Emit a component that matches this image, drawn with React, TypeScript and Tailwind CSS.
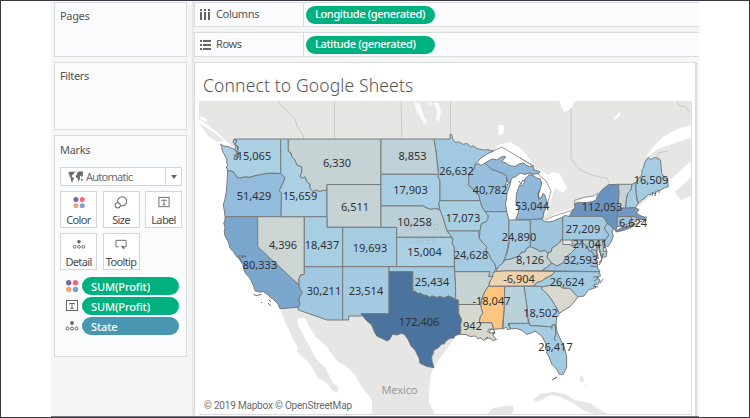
import React from "react";

const FONT = "font-['Noto_Sans','Open_Sans',sans-serif]";

type Shape = { id: string; fill: string; d: string };

const states: Shape[] = [
  { id: "WA", fill: "#abd0e3", d: "220.7,144.3 224,146 228,146.5 232,148.5 235,149.5 236,146 233,142 234,139 280.7,139 280.7,173.5 273,173.2 266.7,173.4 261,174.6 255,175.7 250,177.4 245,177 240,178 236.7,177.3 235,174 234,172.5 231,171 227.7,170.7 226.3,167 228,165 226.5,163 227,160 224,154 222,150 222,147.5" },
  { id: "OR", fill: "#93bbdb", d: "227.7,170.7 231,171 234,172.5 235,174 236.7,177.3 240,178 245,177 250,177.4 255,175.7 261,174.6 266.7,173.4 280.7,173.5 282,174.5 285,177.7 284,181 281.5,186 279.3,191 281.5,192.5 281,216.7 225,216.7 224.5,212 223.3,205 225,199 226.3,191.7 227,184 227.3,176.7" },
  { id: "CA", fill: "#7ba6cd", d: "225,216.7 257.7,216.7 257.7,246.7 299,285 300,289 302.3,292.7 299.5,297 299,301 300,304 298.3,307.3 280,308.7 278,304 276.7,302.7 273,299 270,296.7 267,294 263.3,291.7 259,292 255,290.7 253.3,285 250,278.3 246,274 244,270 243,265 240,260 238.5,258 236.7,256.7 233.3,251.7 230,248 228.3,241.7 225,236 224.3,231.7 225,227 223.7,223.3 225,220" },
  { id: "NV", fill: "#ccd5d3", d: "257.7,216.7 304.3,216.7 304.3,274.5 300.5,275 299,279 299,285 257.7,246.7" },
  { id: "ID", fill: "#abd0e3", d: "280.7,139 288.3,139 288.3,151 291,153 292,157 295,160 297,165 301.7,166.7 302,171 300,176.7 303,178 305,176.7 307,182 310,184 310,188.3 313.3,191.5 316,190 320,191.5 323.3,190 325,191 327,188.3 327,216.7 281,216.7 281.5,192.5 279.3,191 281.5,186 284,181 285,177.7 280.7,173.5" },
  { id: "MT", fill: "#c6d3d5", d: "288.3,139 381,139 381,184.5 327,184.5 327,188.3 325,191 323.3,190 320,191.5 316,190 313.3,191.5 310,188.3 310,184 307,182 305,176.7 303,178 300,176.7 302,171 301.7,166.7 297,165 295,160 292,157 291,153 288.3,151" },
  { id: "WY", fill: "#c6d3d5", d: "327,184.5 381,184.5 381,227.3 327,227.3" },
  { id: "UT", fill: "#a8cee3", d: "304.3,216.7 327,216.7 327,227.3 342.7,227.3 342.7,266.7 304.3,266.7" },
  { id: "CO", fill: "#a6cce2", d: "342.7,227.3 396.7,227.3 396.7,266.7 342.7,266.7" },
  { id: "AZ", fill: "#a0c8e1", d: "304.3,266.7 342.7,266.7 342.7,320 327,320 298,309.8 298.3,307.3 300,304 299,301 299.5,297 302.3,292.7 300,289 299,285 299,279 300.5,275 304.3,274.5" },
  { id: "NM", fill: "#a4cbe2", d: "342.7,266.7 389,266.7 389,313.7 361,313.7 362.5,316 348.7,316 348.7,320 342.7,320" },
  { id: "ND", fill: "#bfd2d9", d: "381,139 434,139 435,145 436,150 437,160 438,168 438.7,174.3 381,174.3" },
  { id: "SD", fill: "#a8cfe3", d: "381,174.3 438.7,174.3 438,177 440,180 440,201 438.7,204 440,209.5 435,208.5 431,209.5 427,208 423,206 381,206" },
  { id: "NE", fill: "#bbd1d9", d: "381,206 423,206 427,208 431,209.5 435,208.5 440,210 442,214 443.3,218.3 445,224 447.3,231.7 450,234 453,237.3 396.7,237.3 396.7,227.3 381,227.3" },
  { id: "KS", fill: "#abd0e3", d: "396.7,237.3 451,237.3 453,240 452,243 454.3,247 454.3,266.7 396.7,266.7" },
  { id: "OK", fill: "#a3cbe2", d: "389,266.7 454.3,266.7 455.5,283 455.7,299.3 452,297.5 448.3,296 444,298 440,296.5 436.7,297.5 432,296 430,297.5 426.7,295.5 423,295 420,293 418.3,293.8 415,291.5 412.7,290.7 412.7,271.7 389,271.7" },
  { id: "TX", fill: "#4a749d", d: "389,271.7 412.7,271.7 412.7,290.7 415,291.5 418.3,293.8 420,293 423,295 426.7,295.5 430,297.5 432,296 436.7,297.5 440,296.5 444,298 448.3,296 452,297.5 455,299.3 458.5,300 458.7,313.3 461,317 461.7,320 460.5,325 461,330 460,334.3 455,335.5 454,338 450,338.3 446,341 444,344 441.7,344 438,348 434,350 433,354 431.7,356.7 432,361 434,367.7 427,366.5 420,363.3 419,358 415,350 411,346 408.3,340 405,335 401.7,333.3 397,335 392.3,334.3 390,339 387.3,341 382,338.5 376.7,336 374,331 371.7,325 366,320 361,313.7 389,313.7" },
  { id: "MN", fill: "#a1cae2", d: "434,139 450,139 450,134.5 451.7,134.5 452.7,139 455,142.3 459,142 463.3,144.3 467,143.5 471,147 473.3,145.7 477,148.5 483.3,150 488,149.7 493.3,151 487,154 481,158 475,164.3 474.5,169 471,172 468.3,174 469,180 468.3,185 472,188 475,191.7 479,195 480,200.7 440,200.7 440,180 438,177 438.7,174.3 438,168 437,160 436,150" },
  { id: "WI", fill: "#98c0de", d: "475,164.3 478,163.5 481,165.5 485,163 488,166 492,169.5 497,171 503,173.5 506.7,176 506.5,181 505,186 508,184 511,181 509,188 507,193 506.7,198.3 505.5,204 506.7,211.7 485,211.7 482,207 480,200.7 479,195 475,191.7 472,188 468.3,185 469,180 468.3,174 471,172 474.5,169" },
  { id: "UP", fill: "#8fb8db", d: "485,163 492,159 497,160 501,157 505.7,156.5 504,159 501.7,161.7 506,163 510,165.7 515,166.5 519,164 524,163 527,166 533,166.5 534,170 540,171.7 539,173.5 533,174.3 529,173 525,174.5 520,173 516,176.5 512,178 510,182.3 507.5,182 506.7,176 503,173.5 497,171 492,169.5 488,166" },
  { id: "MI", fill: "#8fb8db", d: "528.3,175.5 532,175 536,177.7 540,179 541.7,183 540.5,188.3 538,193 538.5,197 541,198.5 543,193.5 545,195 546.7,201.7 546,207 543.5,212 543,218 541.7,219 529.5,219.5 516,219.3 518.5,212 518,206 516,201.7 516.5,194 518.3,188.3 520,184.5 522,186 524,183 525,179" },
  { id: "IA", fill: "#a9cfe3", d: "440,200.7 480,200.7 482,207 485,211.7 488.3,215.7 488,219 486,221.7 481.5,223.5 480.7,226.7 480,231 447.3,231 445,224 443.3,218.3 440,210 438.7,204" },
  { id: "MO", fill: "#a4cbe2", d: "447.3,231 478.5,231 479.3,238.3 483,243 486.7,246.7 486,250 489.3,254.3 491,259 495,264 496,269 494,272 493,276.5 488.5,276.5 490,271.7 454.6,271.7 454.3,247 452,243 453,239" },
  { id: "IL", fill: "#a2cae2", d: "485,211.7 506.7,211.7 509,220 509,241.7 506.7,251.7 505,258.3 502,264 498.3,266.7 496,269 495,264 491,259 489.3,254.3 486,250 486.7,246.7 483,243 479.3,238.3 480,231 480.7,226.7 481.5,223.5 486,221.7 488,219 488.3,215.7" },
  { id: "IN", fill: "#a4cbe2", d: "509,220 530.3,220 530.3,246.7 527,248 525,252 521,252.5 519,256 515,257.5 511,259 505,260 505,258 507.5,251.7 509,244" },
  { id: "OH", fill: "#9cc4df", d: "530.3,219.5 541.7,219 545,221.7 549,222 553.3,221 562.7,217 562.7,238 560,242 556.7,245 552,248 551,252 548,253 545,250.5 540,251.5 535,248.5 530.3,246.7" },
  { id: "KY", fill: "#c1d3d8", d: "530.3,246.7 535,248.5 540,251.5 545,250.5 548,253 547,257 551.7,263 546,268 541.7,270.7 506,270.8 496,271.5 498.3,266.7 502,264 505,260 511,259 515,257.5 519,256 521,252.5 525,252 527,248" },
  { id: "WV", fill: "#cbd5d2", d: "562.7,238 563,244.5 570,244.5 572,246 576,244 582,243 578,246 573,251 570,254 566,257 563,263 556.7,266 551.7,263 547.3,257.3 548,253 551,252 552,248 556.7,245 560,242" },
  { id: "PA", fill: "#a1c9e1", d: "562.7,217 565,215.5 569,216.3 602,216.3 605,219 607.3,223.3 604.5,228 606,231 609,235 605,240 562.7,240" },
  { id: "NY", fill: "#6b93c0", d: "569.3,216.3 572,211 575,208.3 574.3,203.3 580,202.5 586.7,202.5 592,201.7 596,200 597,197 598.3,194.3 603,189 608.3,184.7 618.7,184.3 619,195 617.7,208.3 617,226.7 616,231 612,227 607,223.3 605,219 602,216.3" },
  { id: "LI", fill: "#6b93c0", d: "616,231 621,228 628,226 635,223.5 631,227.5 623,230.5 616,232" },
  { id: "VT", fill: "#c4d3d6", d: "618.7,184.3 632,184.3 631,190 628,193 626.5,198.3 625.7,208.3 617.7,208.3 619,195" },
  { id: "NH", fill: "#a7cde2", d: "632,184.3 635.7,182.5 636.3,195 637,200 638.3,203.3 635,207.7 625.7,208.3 626.5,198.3 628,193 631,190" },
  { id: "ME", fill: "#a5cce2", d: "635.7,182.5 639,178 641.7,175 642,170 643.3,168.3 645,162 648.3,157.5 651,159.5 655,157.3 658,158.5 660.5,160 661.7,173.3 664,177 667.7,180 668.3,186.7 664,188 660,190.5 656.7,191 655,194.5 653,192 650,195 648.3,194 645,198 641.7,200 638.3,203.3 636.3,195" },
  { id: "MA", fill: "#7199c4", d: "617.7,208.3 635,207.7 639,209.5 636.5,213 641,216 644.5,217 645,220 640,219.5 636,217 617.3,216.7" },
  { id: "CT", fill: "#9cc4df", d: "617.3,216.7 631.5,216.5 632,223 624,225 617,226.7" },
  { id: "RI", fill: "#b5d0db", d: "631.5,216.5 636,217 637,221 632,223" },
  { id: "NJ", fill: "#a1c9e1", d: "607.3,223.3 612,227 613.3,230 612,232 613.3,236 611,242 607.5,247 604,243.5 605,240 609,235 606,231 604.5,228" },
  { id: "MD", fill: "#b1cfdf", d: "572,240 603,240 604,251.5 607,251.5 606,257 602,257 600,250 598,244 596,249 598,256 594,255 592,251 589,251 587,246 582,243 576,244 572,246" },
  { id: "DE", fill: "#d9d8cf", d: "602.5,240 605,240 604,243.5 607,251.5 603.5,251.5" },
  { id: "VA", fill: "#9cc5e0", d: "582,243 587,246 589,251 592,252 594,256 597,258 595,261 598,264 597,267 600,271.7 541.7,270.7 546,268 551.7,263 556.7,266 563,263 566,257 570,254 573,251 578,246" },
  { id: "TN", fill: "#edd2ae", d: "496,271.5 506,270.8 555,271.5 552,275 546,278 541.7,281 537,282.5 533.3,286 488.3,286.3 490,281 492,276 494,272" },
  { id: "NC", fill: "#a3cbe2", d: "555,271.5 599,271.7 600.5,276 597,277 600,280 598,284.5 594,284 596,287.5 588.3,290 584,296 577.7,297 570,288.5 562,288 560,286 550,285.5 541.7,287 533.3,286 537,282.5 541.7,281 546,278 552,275" },
  { id: "SC", fill: "#d9d8d0", d: "541.7,287 550,285.5 560,286 562,288 570,288.5 577.7,297 574,302 570,306.7 564,310 559.3,313.5 556,307 551,299 546.7,293.5 541.7,289" },
  { id: "GA", fill: "#aacfe3", d: "524,286.3 541.7,286.3 541.7,289 546.7,293.5 551,299 556,307 559.3,313.5 556.5,318 556,325 552,325 552,328.5 550,326.7 530,325.5 527.8,318 527.3,310" },
  { id: "FL", fill: "#a3cbe2", d: "508,323.3 528.5,323.3 530,325.5 550,326.7 552,328.5 552,325 556,325 557,332 561.7,341.7 564.5,348 566.7,356.7 566.7,367 563.3,374.3 559.3,374.3 556.5,369 551.7,364 549,357 546.7,353.3 547.5,348 545.5,343 541.7,336 535,331 530.5,333.5 526.7,334.3 522,330.5 517,328.5 510.5,329" },
  { id: "AL", fill: "#b8d1db", d: "504.7,286.3 524,286.3 527.3,310 527.8,318 528.5,323.3 508,323.3 510.5,329 507.5,329.5 506,327 503,329.3 504,310" },
  { id: "MS", fill: "#fcc580", d: "488.3,286.3 504.7,286.3 504,310 502.3,328.5 493.5,329.3 491.7,322.7 479.3,322.7 480,317 482.7,313.3 480.7,305 482,298 485,291" },
  { id: "AR", fill: "#c6d3d5", d: "454.6,271.7 490,271.7 488.5,276.5 493,276.5 490,281 488.3,286.3 485,291 482,298 480.5,304.5 458.7,304.5 458.5,300 455.7,299.3 455.5,283" },
  { id: "LA", fill: "#d6d7cd", d: "458.7,304.5 480.5,304.5 482.7,313.3 480,317 479.3,322.7 491.7,322.7 493.5,329.3 489,329 487.5,331.5 491,333 494.5,332 493,335.5 496.5,339.5 493,340.5 490,338.3 487,338 483.3,340.5 481,338 478,338.5 475,336 470,336.5 466,334.5 460,334.3 461,330 460.5,325 461.7,320 458.7,313.3" },
];

const labels: [string, number, number][] = [
  ["15,065", 254, 160],
  ["6,330", 337, 166.5],
  ["8,853", 412.5, 160],
  ["26,632", 456.5, 174.5],
  ["16,509", 651, 183.5],
  ["51,429", 254, 200],
  ["15,659", 300, 199.5],
  ["17,903", 410.5, 194],
  ["40,782", 490, 194],
  ["53,044", 532, 209.5],
  ["112,053", 602, 210.5],
  ["6,511", 355, 210.500],
  ["10,258", 414.5, 226],
  ["17,073", 463, 221.5],
  ["6,624", 633, 226.5],
  ["27,209", 583, 232.5],
  ["4,396", 283, 249],
  ["18,437", 322, 249],
  ["19,693", 370, 251.5],
  ["15,004", 424.5, 256],
  ["24,890", 519, 241],
  ["21,041", 590, 247.5],
  ["80,333", 260, 268.5],
  ["24,628", 471, 258.5],
  ["8,126", 530, 263.5],
  ["32,593", 581, 264],
  ["30,211", 324, 294.5],
  ["23,514", 366, 294.5],
  ["25,434", 432, 286],
  ["-6,904", 519, 283],
  ["26,624", 567, 286],
  ["-18,047", 491.5, 304.5],
  ["18,502", 540.5, 316.5],
  ["172,406", 419, 325.5],
  ["942", 472.5, 329.5],
  ["26,417", 555.5, 351],
];

function UsMap() {
  return (
    <svg className="block h-[313px] w-[492px]" viewBox="199 101 492 313">
      <rect x="199" y="101" width="492" height="313" fill="#fff" />
      <g fill="#e6e6e5">
        <path d="M199 101H691V125L677 129L663 137L654 146L645 158L658 149L675 143L686 139L691 138V161L681 170L668 182L640 205L600 236L480 280L300 250L236 170L234 148L226 141L218 133L209 126L199 119Z" />
        <path d="M199 123L207 128L216 134L224 141L217 142L208 136Z" />
        <path d="M675 192L691 177V196L681 200Z" />
        <path d="M280 308L285 322 290 332 293 340 298 347 297 352 303 357 310 364 314 371 318 378 328 384 332 390 337 393 339 388 332 382 325 367 320 363 315 357 310 347 305 339 302 332 298 325 298 318 305 318 310 328 317 338 327 347 331 353 338 362 347 367 355 375 362 387 372 400V414H435L429 402 429 393 431 375 434 367 460 330 361 300Z" />
        <path d="M487 414L493 408 505 406 513 405 514 410 511 414Z" />
        <path d="M533 400L540 394 553 391.7 565 394 570 397 575 400 590 403 600 410 608 414H594L583 410 573 403 560 397 552 395 547 397 537 401.7Z" />
        <path d="M580 377L583 375 584 382 580 382ZM584 383L586 385 585 386Z" />
      </g>
      <g fill="#fff">
        <path d="M201 116l6 3 -1 3 -6-3Z" />
        <path d="M414 102l6 2 4 13 3 4 -3 4 -3-7 -4-6ZM434 103l5 0 2 9 -2 10 -3-3 1-8ZM428 102l4 2 -2 3Z" fillOpacity=".8" />
        <path d="M498 126q4-3 6 1l-1 7 -4 1Z" />
        <path d="M559 101h16l-4 8 -7 3Z" />
        <path d="M614 118l7-7 -2 6 -5 3Z" />
        <path d="M474 165L480 157 494 151 498 145 510 142 520 148 530 159 535 168 525 168 510 168 501 162 505 157 500 159 485 164Z" />
        <path d="M533 174L540 169 548 175 553 172 560 174 567 188 563 193 555 188 552 197 547 212 542 219 540 181Z" />
        <path d="M507 178L520 173 531 172 527 179 523 185 518 188 516 200 518 212 514 219 508 221 506 203Z" />
        <path d="M542 221L555 214 573 208 577 209 568 217 552 222Z" />
        <path d="M574 205L582 199 596 196 597 200 588 204Z" />
      </g>
      <g fill="none" stroke="#bcbcbc" strokeWidth=".7">
        <path d="M278 101l5 7 5 3 3 5 4 3 2 7 5 7 2 6M334.500 101V139M401 101l1 38M450.500 101V135" />
        <path d="M571 108V158l4 6 5 6 9 4 10 3 8 1 3 7M656 162l2-9 10-2M677 101l3 5 6 1 3 5" />
      </g>
      <g fill="none" stroke="#858585" strokeWidth=".8">
        <path d="M493 151l9-4 28 17 4 3M520 158l14 8M528 174l9-1 9 8 5 10 -4 14 -5 14M545 220l9-4 16-5 5-3M574 202l1-2 10-3 9-1 4-3" />
      </g>
      <g stroke="#777a7c" strokeWidth="1" strokeLinejoin="round">
        {states.map((s) => (
          <polygon key={s.id} points={s.d} fill={s.fill} />
        ))}
      </g>
      <g fill="none" stroke="#6d6c6d" strokeWidth="1">
        <path d="M234 139.500l3 1 -2 4 3 2 -1 5 2 4 -2 4 -3 0 1-5 2 4 1-11M236 145l3 3M236 155l2-3 -1 7M235 150l3 4" />
        <path d="M238 256l8 0 -5 2M239 257l3 5M253.500 294.500l3 1 5-1M261 302l1 1M269 300l2 2M268 303l3 3" />
        <path d="M519 181l2 3 2-4 2 1M540 190l-2 5 1 5M596 243l2 6 -2 4 3 6M600 243l-1 7 3 9 -3 4M591 249l5 2M603 254l-2 8 -2 3M590 262l7 2M590 266l8 1M593 277l6 0M594 281l5-3M600 283l3-4M593 286l5 1M601 258l3-5" />
        <path d="M489 332l2-3 3 1 1 3 -3 1M485 339l3-2M555 325l1 9 -2 5 2 2M508 326l2-2M554 379l3-2 -5 3M642 219l4 2 0-5M632 226l10-5M655 196l1-5M652 196l1-4M659 193l0-3" />
      </g>
      <g className="font-['Noto_Sans',sans-serif] text-[11px]" textAnchor="middle" fill="#98a8ad">
        <text x="422" y="229.500" fillOpacity=".4">United</text>
        <text x="421" y="243.500" fillOpacity=".4">States</text>
        <text x="399.500" y="393.500" fill="#999" textLength="36">Mexico</text>
      </g>
      <g className="font-['Noto_Sans',sans-serif] text-[11px]" textAnchor="middle" fill="#303032">
        {labels.map(([t, x, y]) => (
          <text key={t} x={x} y={y}>
            {t}
          </text>
        ))}
      </g>
      <text
        className="font-['Roboto',sans-serif] text-[10px]"
        x="204"
        y="409"
        fill="#6a6a6a"
        textLength="148"
      >
        © 2019 Mapbox © OpenStreetMap
      </text>
    </svg>
  );
}

function ColorIcon() {
  return (
    <svg className="h-[14px] w-[14px]" viewBox="0 0 14 14">
      <circle cx="3.700" cy="3.700" r="2.700" fill="#82688f" />
      <circle cx="10.500" cy="3.700" r="2.700" fill="#f0697a" />
      <circle cx="3.700" cy="10.500" r="2.700" fill="#f4a477" />
      <circle cx="10.500" cy="10.500" r="2.700" fill="#7ba3cc" />
    </svg>
  );
}

function SizeIcon() {
  return (
    <svg className="h-[14px] w-[14px]" viewBox="0 0 14 14" fill="none" stroke="#666" strokeWidth="1.100">
      <path d="M3.600 7.200A4.900 4.900 0 1 1 6.400 10.200" />
      <circle cx="3.500" cy="10" r="2.800" />
    </svg>
  );
}

function LabelIcon() {
  return (
    <svg className="h-[14px] w-[14px]" viewBox="0 0 14 14" fill="none" stroke="#666">
      <rect x="1.500" y="1.500" width="11" height="10" />
      <path d="M4.500 5.500V4.500H9.500V5.500M7 4.500V9.500M5.500 9.500H8.500" />
    </svg>
  );
}

function DetailIcon() {
  return (
    <svg className="h-[14px] w-[14px]" viewBox="0 0 14 14" fill="none" stroke="#666">
      <circle cx="7" cy="4" r="1.900" fill="#666" stroke="none" />
      <circle cx="2.400" cy="9.500" r="1.500" />
      <circle cx="7" cy="9.500" r="1.500" />
      <circle cx="11.600" cy="9.500" r="1.500" />
    </svg>
  );
}

function TooltipIcon() {
  return (
    <svg className="h-[14px] w-[14px]" viewBox="0 0 14 14" fill="none" stroke="#666">
      <path d="M4.500 9.500H1.500V2.500H12.500V9.500H10.500" />
      <path d="M7 9l3 3.500V8.500Z" fill="#666" stroke="none" />
      <path d="M7.500 8.500l2.500 3V8.500" />
    </svg>
  );
}

function MapIcon() {
  return (
    <svg className="h-[12px] w-[16px] shrink-0" viewBox="0 0 16 12" fill="#6b6b6b">
      <path d="M0 2l2-1.300 3-.2 1.500 1L5.500 3 4 4.200 3.500 5.500l2 1.200L6 8l-1.300 1.600L4.300 12 3 10 2.800 7.200 1.500 5.300 1.300 3.200ZM6 .3l1.600-.2L7 1.500Z" />
      <path d="M8.500 2.700L10 1l2-.7 3.500.6-.7 1.600.2 2L13.500 6l-.8-1.200-1 .2.500 1.500L11.500 9l-1 1.400L9.400 7.300 7.700 6.200 8 4.300 9.500 3.700ZM13 7.500l2 1-.7 1.300-1.500-.5Z" />
    </svg>
  );
}

function MarkButton({ icon, label }: { icon: React.ReactNode; label: string }) {
  return (
    <div className="flex h-[37px] w-[37px] flex-col items-center border border-[#d3d5d6] bg-white pt-[4px]">
      {icon}
      <span className="mt-[3px] text-[11px] leading-[15px] tracking-[-0.65px] whitespace-nowrap text-[#4c4c4c]">{label}</span>
    </div>
  );
}

function MarkPill({ icon, label, blue }: { icon: React.ReactNode; label: string; blue?: boolean }) {
  return (
    <div className="flex items-center gap-[3px]">
      {icon}
      <div
        className={`flex h-[18px] w-[97px] items-center rounded-full pl-[9px] text-[11px] font-medium tracking-[-0.1px] text-white ${
          blue ? "bg-[#4996b2]" : "bg-[#00b180]"
        }`}
      >
        {label}
      </div>
    </div>
  );
}

function Shelf({ icon, label, field }: { icon: React.ReactNode; label: string; field: string }) {
  return (
    <div className="flex h-[25px] items-center border border-r-0 border-[#d9dcdc] bg-[#fafbfd]">
      <div className="flex h-full w-[109px] items-center gap-[4px] border-r border-[#d9dcdc] pl-[5px] text-[11px] text-[#555]">
        {icon}
        <span className="tracking-[-0.35px]">{label}</span>
      </div>
      <div className="ml-[2px] flex h-[18px] w-[129px] items-center rounded-full bg-[#00b180] pl-[9px] text-[11px] font-medium tracking-[-0.36px] whitespace-nowrap text-white">
        {field}
      </div>
    </div>
  );
}

function ColumnsIcon() {
  return (
    <svg className="h-[12px] w-[12px]" viewBox="0 0 12 12" fill="#666">
      <path d="M0 0h2v2H0zM4 0h2v2H4zM8 0h2v2H8zM0 3h2v8H0zM4 3h2v8H4zM8 3h2v8H8z" />
    </svg>
  );
}

function RowsIcon() {
  return (
    <svg className="h-[12px] w-[12px]" viewBox="0 0 12 12" fill="#666">
      <path d="M0 1h2v2H0zM0 5h2v2H0zM0 9h2v2H0zM3 1h8v2H3zM3 5h8v2H3zM3 9h8v2H3z" />
    </svg>
  );
}

export default function App() {
  const card = "border border-[#d9dcdb] bg-[#fafbfd] px-[5px] text-[11px] leading-[15px] tracking-[-0.35px] text-[#555]";
  return (
    <div className={`flex h-[418px] w-[750px] justify-center border border-[#3b3844] bg-white ${FONT}`}>
      <div className="flex h-[416px] w-[648px] overflow-hidden border-b border-[#77757b] bg-[#f4f6f6]">
        <aside className="flex w-[143px] shrink-0 flex-col gap-[5px] border-r-2 border-[#e6e8e8] pt-[1px] pr-[5px] pl-[3px]">
          <section className={`h-[55px] pt-[5px] ${card}`}>Pages</section>
          <section className={`h-[68px] pt-[5px] ${card}`}>Filters</section>
          <section className={`h-[222px] pt-[6px] ${card}`}>
            <h2>Marks</h2>
            <div className="mt-[10px] flex h-[19px] w-[122px] items-center rounded-[1px] border border-[#d3d5d6] bg-white pl-[7px]">
              <MapIcon />
              <span className="ml-[2px] flex-1 tracking-[-0.75px] text-[#6b6b6b]">Automatic</span>
              <div className="flex h-full w-[16px] items-center justify-center border-l border-[#d3d5d6]">
                <div className="h-0 w-0 border-x-[3px] border-t-[4px] border-x-transparent border-t-[#666]" />
              </div>
            </div>
            <div className="mt-[5px] grid w-[122px] grid-cols-[37px_37px_37px] justify-between gap-y-[5px]">
              <MarkButton icon={<ColorIcon />} label="Color" />
              <MarkButton icon={<SizeIcon />} label="Size" />
              <MarkButton icon={<LabelIcon />} label="Label" />
              <MarkButton icon={<DetailIcon />} label="Detail" />
              <MarkButton icon={<TooltipIcon />} label="Tooltip" />
            </div>
            <div className="mt-[7px] flex flex-col gap-[2px] pl-[5px]">
              <MarkPill icon={<ColorIcon />} label="SUM(Profit)" />
              <MarkPill icon={<LabelIcon />} label="SUM(Profit)" />
              <MarkPill icon={<DetailIcon />} label="State" blue />
            </div>
          </section>
        </aside>
        <main className="flex min-w-0 flex-1 flex-col gap-[5px] pt-[1px]">
          <Shelf icon={<ColumnsIcon />} label="Columns" field="Longitude (generated)" />
          <Shelf icon={<RowsIcon />} label="Rows" field="Latitude (generated)" />
          <section className="mr-[2px] flex-1 border border-r-2 border-b-0 border-[#d9dcdb] bg-white pl-[4px]">
            <h1 className="h-[38px] pt-[10px] pl-[4px] text-[17.500px] leading-[24px] font-light tracking-[0.14px] whitespace-nowrap text-[#555]">
              Connect to Google Sheets
            </h1>
            <div className="w-[493px] border-r border-b border-[#dedede]">
              <UsMap />
            </div>
          </section>
        </main>
      </div>
    </div>
  );
}
